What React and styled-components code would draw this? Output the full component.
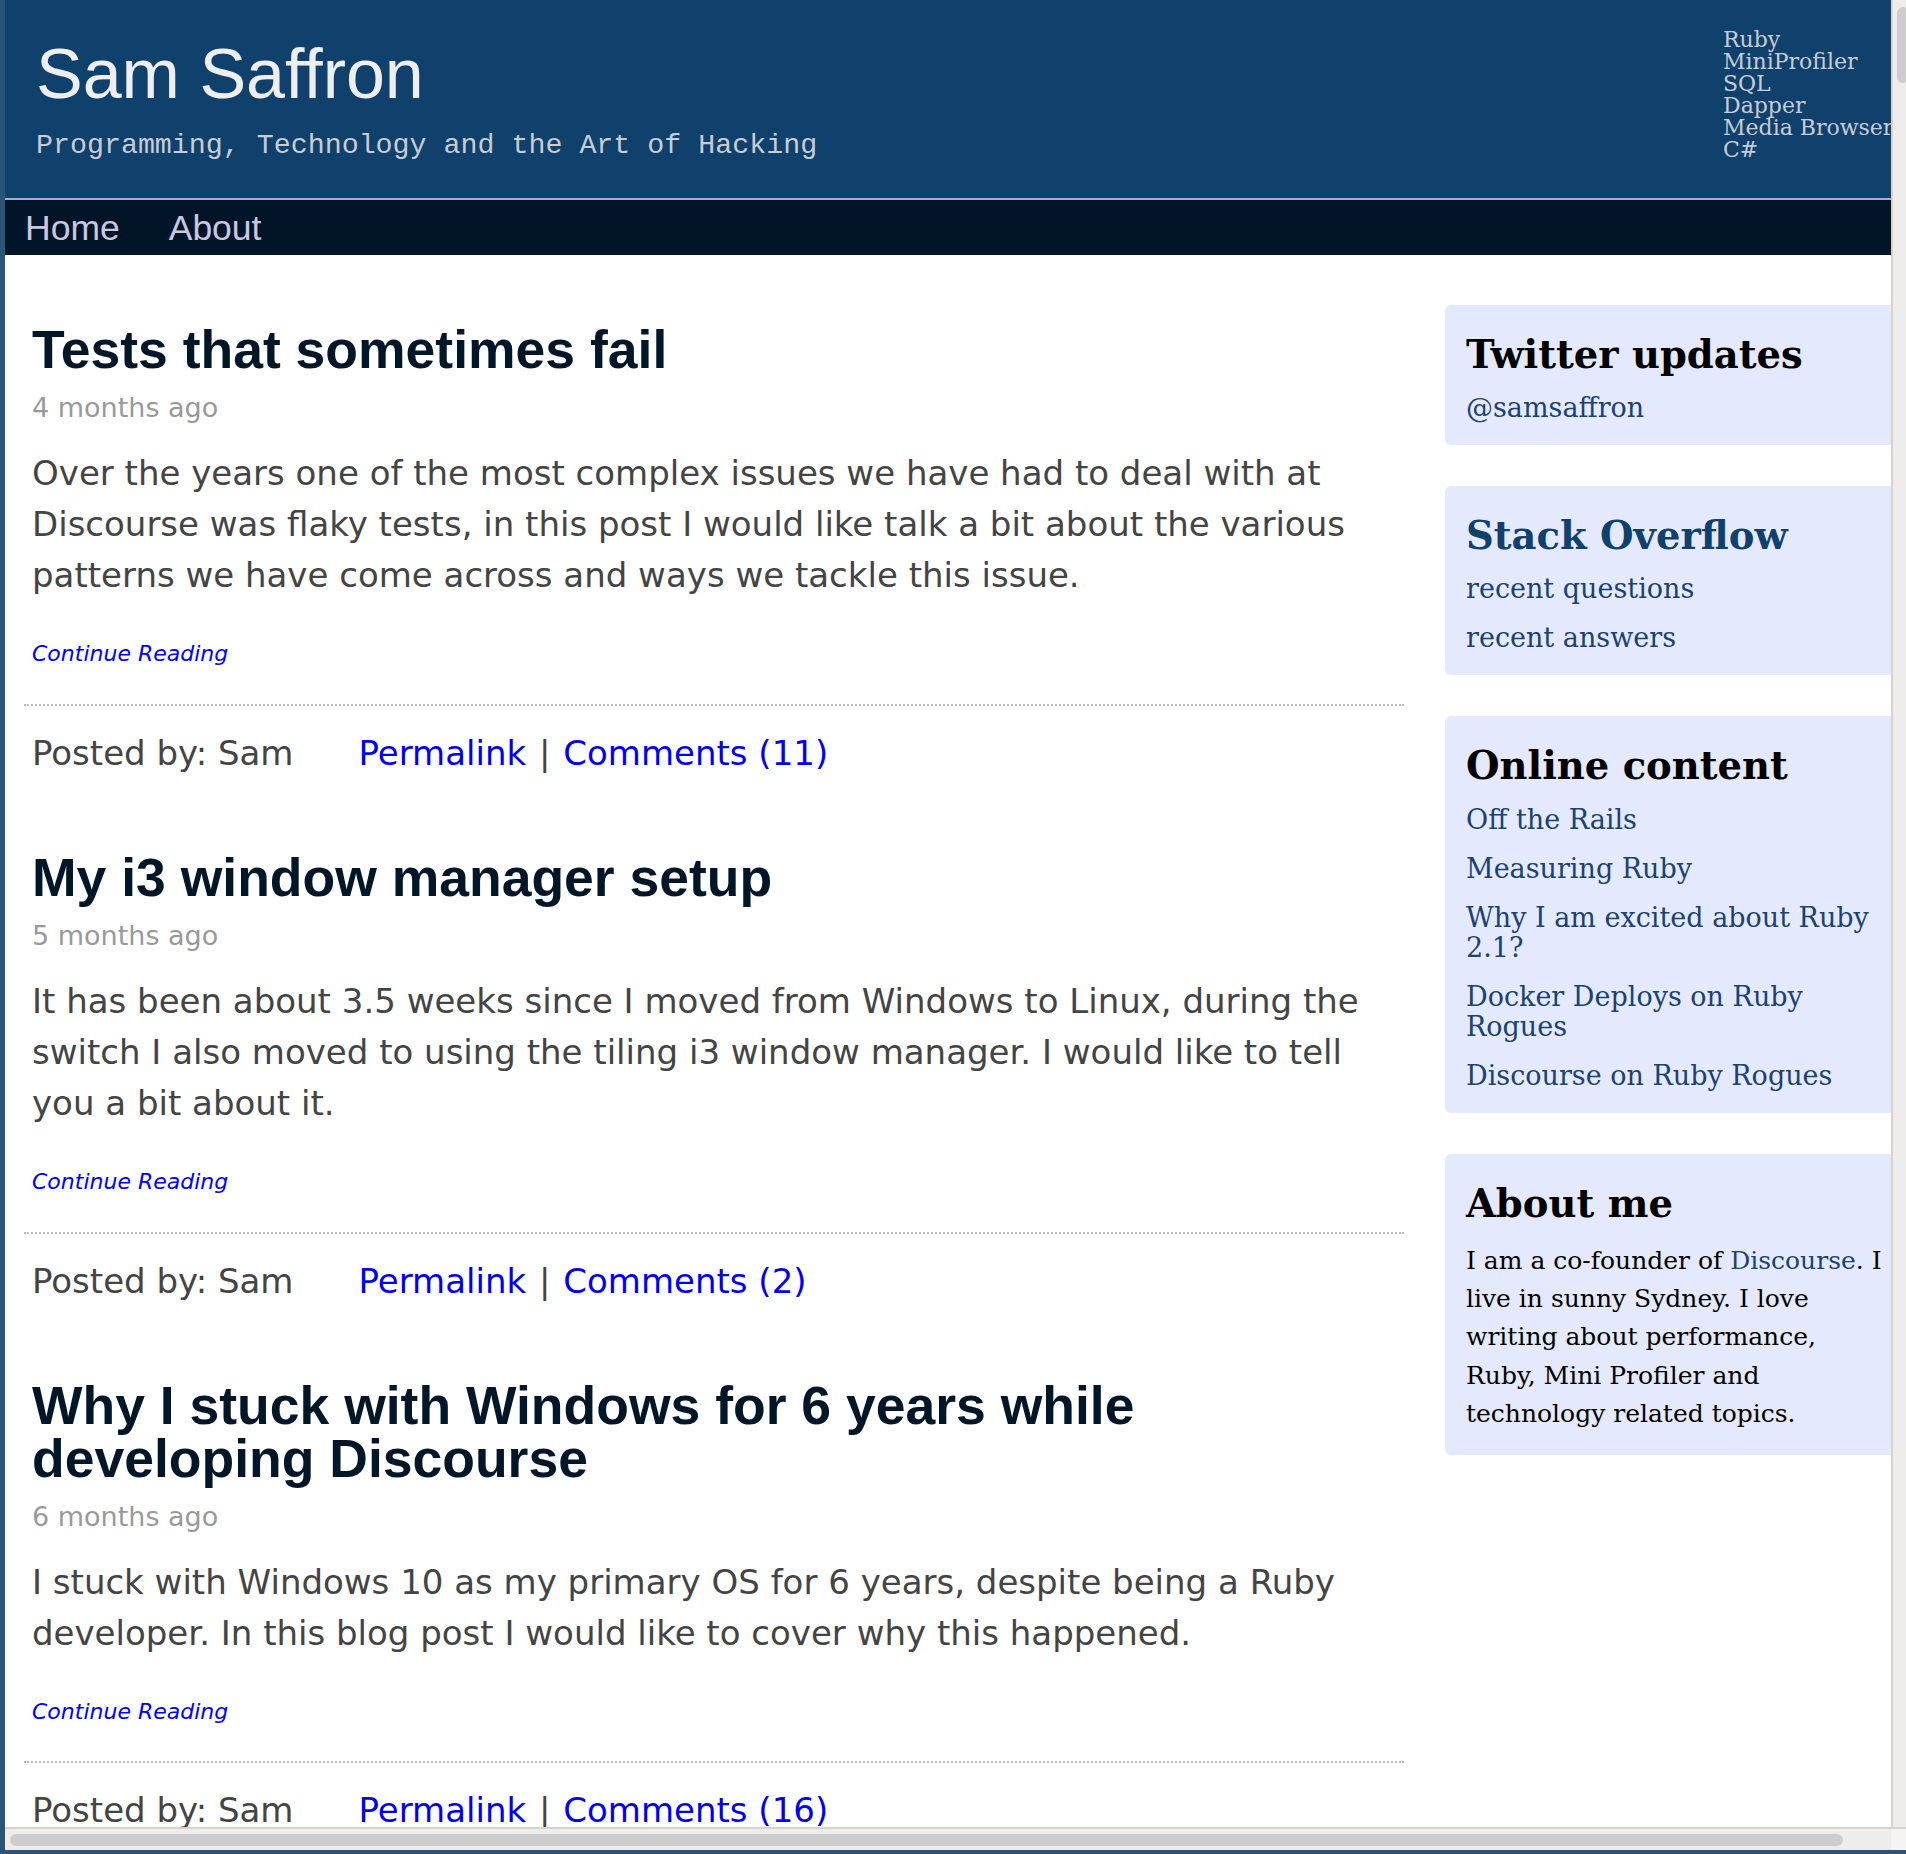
import styled, { createGlobalStyle } from "styled-components";

const GlobalStyle = createGlobalStyle`
    html, body {
        margin: 0;
        padding: 0;
        height: 100%;
        overflow: hidden;
        background: #2a5578;
    }
`;

// the framed window: content, a vertical bar on the right, a horizontal bar below
const Viewport = styled.div`
    margin-left: 5px;
    width: 1901px;
    height: 1850px;
    display: grid;
    grid-template-columns: 1886px 15px;
    grid-template-rows: 1827px 23px;
    background: #ffffff;
`;

const Content = styled.div`
    overflow: hidden;
`;

const VScroll = styled.div`
    background: #efedeb;
    border-left: 2px solid #d8d2cc;
    overflow: hidden;
`;

const VThumb = styled.div`
    width: 12px;
    height: 76px;
    margin: 7px 0 0 4px;
    background: #cdcdcd;
    border-radius: 6px;
`;

const HScroll = styled.div`
    background: #efedeb;
    border-top: 2px solid #d8d2cc;
`;

const HThumb = styled.div`
    width: 1833px;
    height: 12px;
    margin: 5px 0 0 5px;
    background: #cdcdcd;
    border-radius: 6px;
`;

const Corner = styled.div`
    background: #f5f4f2;
    border-top: 2px solid #d8d2cc;
`;

const Page = styled.div`
    width: 1932px;
`;

const Header = styled.header`
    height: 198px;
    background: #10406c;
    border-bottom: 2px solid #a9a9cf;
    display: flex;
    justify-content: space-between;
    padding: 0 14px 0 31px;
`;

const Brand = styled.div`
    padding-top: 39px;
`;

const SiteTitle = styled.h1`
    margin: 0;
    font: 400 70px/70px "Liberation Sans", Arial, sans-serif;
    color: #eeeeee;
`;

const Tagline = styled.p`
    margin: 22px 0 0;
    font: 28.3px/28px "Liberation Mono", "Courier New", monospace;
    color: #c9ccd2;
`;

const TagList = styled.ul`
    list-style: none;
    margin: 0;
    padding: 29px 0 0;
    width: 200px;
    white-space: nowrap;
    font: 22px/22px "DejaVu Serif", serif;
    color: #c6ccd4;
`;

const Nav = styled.nav`
    height: 55px;
    background: #011428;
    display: flex;
    gap: 49px;
    padding-left: 20px;
`;

const NavLink = styled.a`
    font: 35.5px/57px "Liberation Sans", Arial, sans-serif;
    color: #c8c8e0;
    text-decoration: none;
`;

const Main = styled.div`
    display: flex;
    align-items: flex-start;
    padding-left: 19px;
`;

const Posts = styled.div`
    width: 1380px;
    padding-top: 68px;
`;

const Post = styled.article`
    padding: 0 8px;

    & + & {
        margin-top: 72px;
    }
`;

const PostTitle = styled.h2`
    margin: 0;
    font: 700 53.5px/53px "Liberation Sans", Arial, sans-serif;
    color: #011627;
`;

const PostDate = styled.div`
    margin-top: 16px;
    font: 27px/1.2 "DejaVu Sans", Verdana, sans-serif;
    color: #999999;
`;

const Excerpt = styled.p`
    margin: 24px 0 0;
    font: 34px/51px "DejaVu Sans", Verdana, sans-serif;
    color: #444444;
`;

const ContinueLink = styled.a`
    display: block;
    margin-top: 40px;
    font: italic 22px/1.2 "DejaVu Sans", Verdana, sans-serif;
    color: #0000ee;
    text-decoration: none;
`;

const Separator = styled.hr`
    margin: 36px -8px 0;
    border: 0;
    border-top: 2px dotted #bbbbbb;
`;

const Meta = styled.div`
    margin-top: 22px;
    font: 34px/51px "DejaVu Sans", Verdana, sans-serif;
    color: #444444;
`;

const Author = styled.span`
    margin-right: 65px;
`;

const Pipe = styled.span`
    padding: 0 2px;
`;

const MetaLink = styled.a`
    color: #0000ee;
    text-decoration: none;
`;

const Sidebar = styled.aside`
    width: 464px;
    margin-left: 41px;
    padding-top: 50px;
    display: flex;
    flex-direction: column;
    gap: 41px;
`;

const Box = styled.section`
    background: #e4e9fd;
    border-radius: 6px;
    padding: 27px 21px 22px;
`;

const BoxTitle = styled.h3`
    margin: 0 0 15px;
    font: 700 38.5px/1.2 "DejaVu Serif", serif;
    color: ${(props) => props.$color || "#000000"};
`;

const LinkList = styled.ul`
    list-style: none;
    margin: 0;
    padding: 0;
    display: flex;
    flex-direction: column;
    gap: 19px;
`;

const SideLink = styled.a`
    font: 27px/30px "DejaVu Serif", serif;
    color: #1a4272;
    text-decoration: none;
`;

const AboutText = styled.p`
    margin: 6px 0 0;
    font: 25px/38.3px "DejaVu Serif", serif;
    color: #000000;

    a {
        color: #1a4272;
        text-decoration: none;
    }
`;

const tags = ["Ruby", "MiniProfiler", "SQL", "Dapper", "Media Browser", "C#"];

const posts = [
    {
        title: "Tests that sometimes fail",
        date: "4 months ago",
        excerpt:
            "Over the years one of the most complex issues we have had to deal with at Discourse was flaky tests, in this post I would like talk a bit about the various patterns we have come across and ways we tackle this issue.",
        comments: 11,
    },
    {
        title: "My i3 window manager setup",
        date: "5 months ago",
        excerpt:
            "It has been about 3.5 weeks since I moved from Windows to Linux, during the switch I also moved to using the tiling i3 window manager. I would like to tell you a bit about it.",
        comments: 2,
    },
    {
        title: "Why I stuck with Windows for 6 years while developing Discourse",
        date: "6 months ago",
        excerpt:
            "I stuck with Windows 10 as my primary OS for 6 years, despite being a Ruby developer. In this blog post I would like to cover why this happened.",
        comments: 16,
    },
];

const onlineContent = [
    "Off the Rails",
    "Measuring Ruby",
    "Why I am excited about Ruby 2.1?",
    "Docker Deploys on Ruby Rogues",
    "Discourse on Ruby Rogues",
];

const App = () => {
    return (
        <>
            <GlobalStyle />
            <Viewport>
                <Content>
                    <Page>
                        <Header>
                            <Brand>
                                <SiteTitle>Sam Saffron</SiteTitle>
                                <Tagline>Programming, Technology and the Art of Hacking</Tagline>
                            </Brand>
                            <TagList>
                                {tags.map((tag) => (
                                    <li key={tag}>{tag}</li>
                                ))}
                            </TagList>
                        </Header>
                        <Nav>
                            <NavLink href="#">Home</NavLink>
                            <NavLink href="#">About</NavLink>
                        </Nav>
                        <Main>
                            <Posts>
                                {posts.map((post) => (
                                    <Post key={post.title}>
                                        <PostTitle>{post.title}</PostTitle>
                                        <PostDate>{post.date}</PostDate>
                                        <Excerpt>{post.excerpt}</Excerpt>
                                        <ContinueLink href="#">Continue Reading</ContinueLink>
                                        <Separator />
                                        <Meta>
                                            <Author>Posted by: Sam</Author>
                                            <MetaLink href="#">Permalink</MetaLink>
                                            <Pipe> | </Pipe>
                                            <MetaLink href="#">Comments ({post.comments})</MetaLink>
                                        </Meta>
                                    </Post>
                                ))}
                            </Posts>
                            <Sidebar>
                                <Box>
                                    <BoxTitle>Twitter updates</BoxTitle>
                                    <LinkList>
                                        <li>
                                            <SideLink href="#">@samsaffron</SideLink>
                                        </li>
                                    </LinkList>
                                </Box>
                                <Box>
                                    <BoxTitle $color="#10406c">Stack Overflow</BoxTitle>
                                    <LinkList>
                                        <li>
                                            <SideLink href="#">recent questions</SideLink>
                                        </li>
                                        <li>
                                            <SideLink href="#">recent answers</SideLink>
                                        </li>
                                    </LinkList>
                                </Box>
                                <Box>
                                    <BoxTitle>Online content</BoxTitle>
                                    <LinkList>
                                        {onlineContent.map((item) => (
                                            <li key={item}>
                                                <SideLink href="#">{item}</SideLink>
                                            </li>
                                        ))}
                                    </LinkList>
                                </Box>
                                <Box>
                                    <BoxTitle>About me</BoxTitle>
                                    <AboutText>
                                        I am a co-founder of <a href="#">Discourse</a>. I live in sunny
                                        Sydney. I love writing about performance, Ruby, Mini Profiler and
                                        technology related topics.
                                    </AboutText>
                                </Box>
                            </Sidebar>
                        </Main>
                    </Page>
                </Content>
                <VScroll>
                    <VThumb />
                </VScroll>
                <HScroll>
                    <HThumb />
                </HScroll>
                <Corner />
            </Viewport>
        </>
    );
};

export default App;
